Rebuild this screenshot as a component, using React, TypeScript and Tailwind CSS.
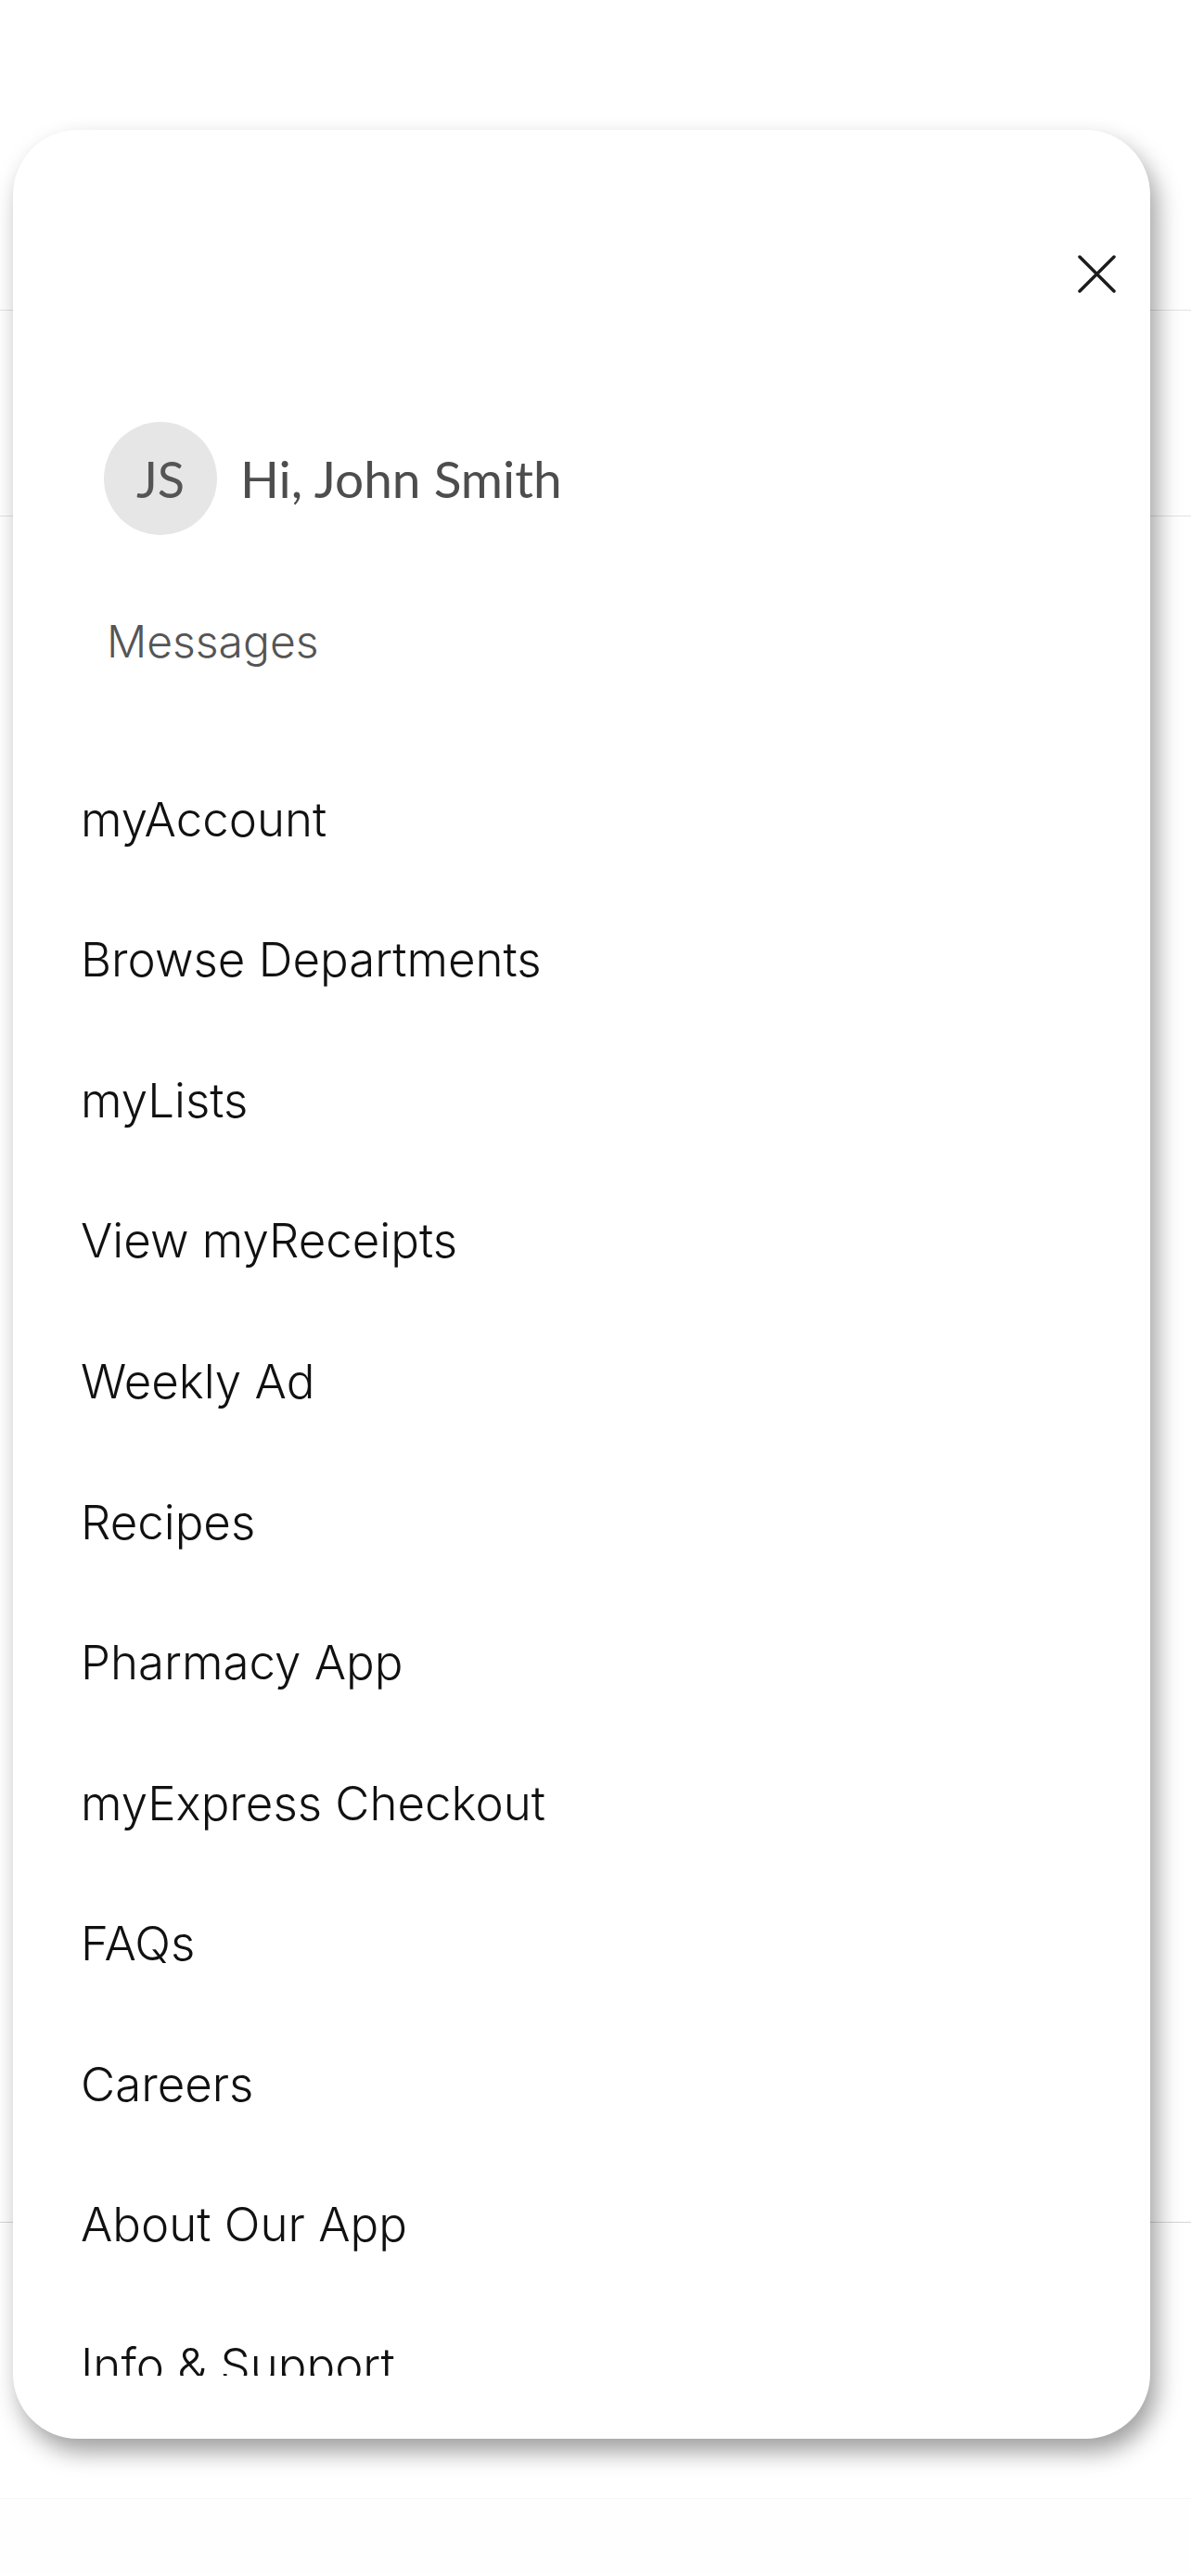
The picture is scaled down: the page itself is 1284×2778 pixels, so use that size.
import React from 'react';

const menuItems = [
  'myAccount',
  'Browse Departments',
  'myLists',
  'View myReceipts',
  'Weekly Ad',
  'Recipes',
  'Pharmacy App',
  'myExpress Checkout',
  'FAQs',
  'Careers',
  'About Our App',
  'Info & Support',
];

// Faint page sitting behind the open drawer
const BackgroundPage: React.FC = () => (
  <div className="min-h-[2778px] w-full bg-white">
    <div className="h-[335px] border-b border-[#e2e2e2]" />
    <div className="h-[222px] border-b border-[#e2e2e2]" />
    <div className="h-[1840px] border-b border-[#d6d6d6]" />
    <div className="h-[298px] border-b border-[#f6f6f6]" />
    <div className="h-[80px] bg-[#fefefe]" />
  </div>
);

const CloseIcon: React.FC = () => (
  <svg width="41" height="41" viewBox="0 0 41 41" fill="none">
    <path d="M2 2 L39 39 M39 2 L2 39" stroke="#1c1c1c" strokeWidth="3.5" strokeLinecap="round" />
  </svg>
);

export default function App() {
  return (
    <div className="relative w-[1284px] h-[2778px] overflow-hidden bg-white">
      <BackgroundPage />

      {/* Side drawer */}
      <div className="absolute left-[14px] top-[140px] w-[1226px] h-[2490px] rounded-[70px] bg-white shadow-[7px_14px_26px_rgba(0,0,0,0.38)] overflow-hidden flex flex-col">
        <div className="flex justify-end pt-[135px] pr-[37px]">
          <button className="w-[41px] h-[41px]" aria-label="Close">
            <CloseIcon />
          </button>
        </div>

        <div className="mt-[139px] pl-[98px] flex items-center gap-[25px]" style={{ fontFamily: 'Lato, sans-serif' }}>
          <div className="w-[122px] h-[122px] rounded-full bg-[#e6e6e6] flex items-center justify-center text-[54px] text-[#555555]">
            JS
          </div>
          <span className="text-[55px] text-[#4d4d4d]">Hi, John Smith</span>
        </div>

        <div className="mt-[85px] pl-[101px] text-[48px] leading-[60px] text-[#555555] font-light" style={{ fontFamily: 'Inter, sans-serif' }}>
          Messages
        </div>

        <div className="mt-[86px] flex-1 overflow-hidden mb-[68px]">
          <ul className="pl-[73px]" style={{ fontFamily: 'Inter, sans-serif' }}>
            {menuItems.map((item) => (
              <li key={item} className="h-[151.6px] flex items-center text-[51px] font-light text-[#111111]">
                {item}
              </li>
            ))}
          </ul>
        </div>
      </div>
    </div>
  );
}
